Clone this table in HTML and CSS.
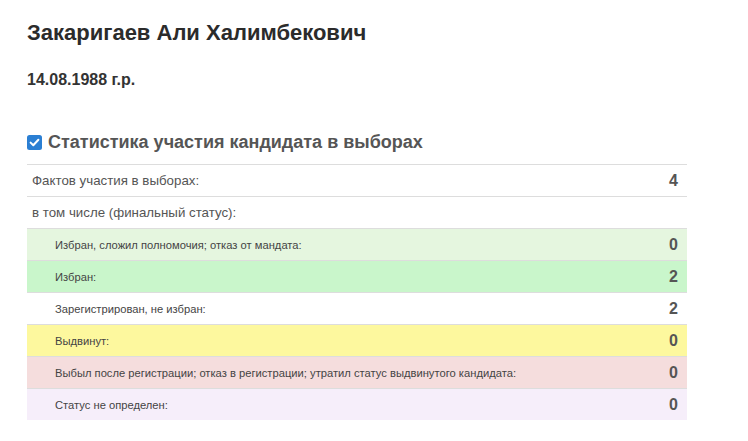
FILE: index.html
```html
<!DOCTYPE html>
<html lang="ru">
<head>
<meta charset="utf-8">
<link rel="stylesheet" href="styles.css">
</head>
<body>
<div class="page">
  <h1 class="name">Закаригаев Али Халимбекович</h1>
  <div class="birth">14.08.1988 г.р.</div>
  <h2 class="section">
    <span class="check"><svg width="15" height="15" viewBox="0 0 15 15"><rect x="0" y="0" width="15" height="15" rx="2.5" fill="#2b7fd3"/><path d="M3.6 7.6 L6.3 10.2 L11.4 4.8" fill="none" stroke="#fff" stroke-width="2" stroke-linecap="round" stroke-linejoin="round"/></svg></span>
    Статистика участия кандидата в выборах
  </h2>
  <div class="stats">
    <div class="row"><span class="label">Фактов участия в выборах:</span><span class="num">4</span></div>
    <div class="row"><span class="label">в том числе (финальный статус):</span><span class="num"></span></div>
    <div class="row sub green-light"><span class="label">Избран, сложил полномочия; отказ от мандата:</span><span class="num">0</span></div>
    <div class="row sub green"><span class="label">Избран:</span><span class="num">2</span></div>
    <div class="row sub"><span class="label">Зарегистрирован, не избран:</span><span class="num">2</span></div>
    <div class="row sub yellow"><span class="label">Выдвинут:</span><span class="num">0</span></div>
    <div class="row sub pink"><span class="label">Выбыл после регистрации; отказ в регистрации; утратил статус выдвинутого кандидата:</span><span class="num">0</span></div>
    <div class="row sub lilac"><span class="label">Статус не определен:</span><span class="num">0</span></div>
  </div>
</div>
</body>
</html>
```
FILE: styles.css
```css
html, body {
  margin: 0;
  padding: 0;
  background: #fff;
}
body {
  font-family: "Liberation Sans", Arial, sans-serif;
  color: #333;
}
.page {
  padding: 20px 61px 0 27px;
}
.name {
  margin: 0;
  font-size: 22px;
  line-height: 26px;
  font-weight: bold;
  color: #2b2b2b;
}
.birth {
  margin-top: 24px;
  font-size: 16px;
  line-height: 20px;
  font-weight: bold;
  color: #333;
}
.section {
  margin: 40px 0 0 0;
  display: flex;
  align-items: center;
  gap: 6px;
  font-size: 18px;
  line-height: 24px;
  font-weight: bold;
  color: #555;
}
.check {
  display: flex;
  width: 15px;
  height: 15px;
}
.stats {
  margin-top: 10px;
  border-top: 1px solid #ddd;
}
.row {
  display: flex;
  justify-content: space-between;
  align-items: center;
  height: 31px;
  border-bottom: 1px solid #ddd;
  padding: 0 9px 0 5px;
}
.row:last-child {
  border-bottom: none;
}
.label {
  font-size: 13.3px;
  color: #555;
}
.num {
  font-size: 16px;
  font-weight: bold;
  color: #555;
}
.sub .label {
  font-size: 11.2px;
  color: #444;
  padding-left: 23px;
}
.green-light { background: #e5f6df; }
.green { background: #c9f6cb; }
.yellow { background: #fdf89e; }
.pink { background: #f5dddd; }
.lilac { background: #f6eefa; }
```
